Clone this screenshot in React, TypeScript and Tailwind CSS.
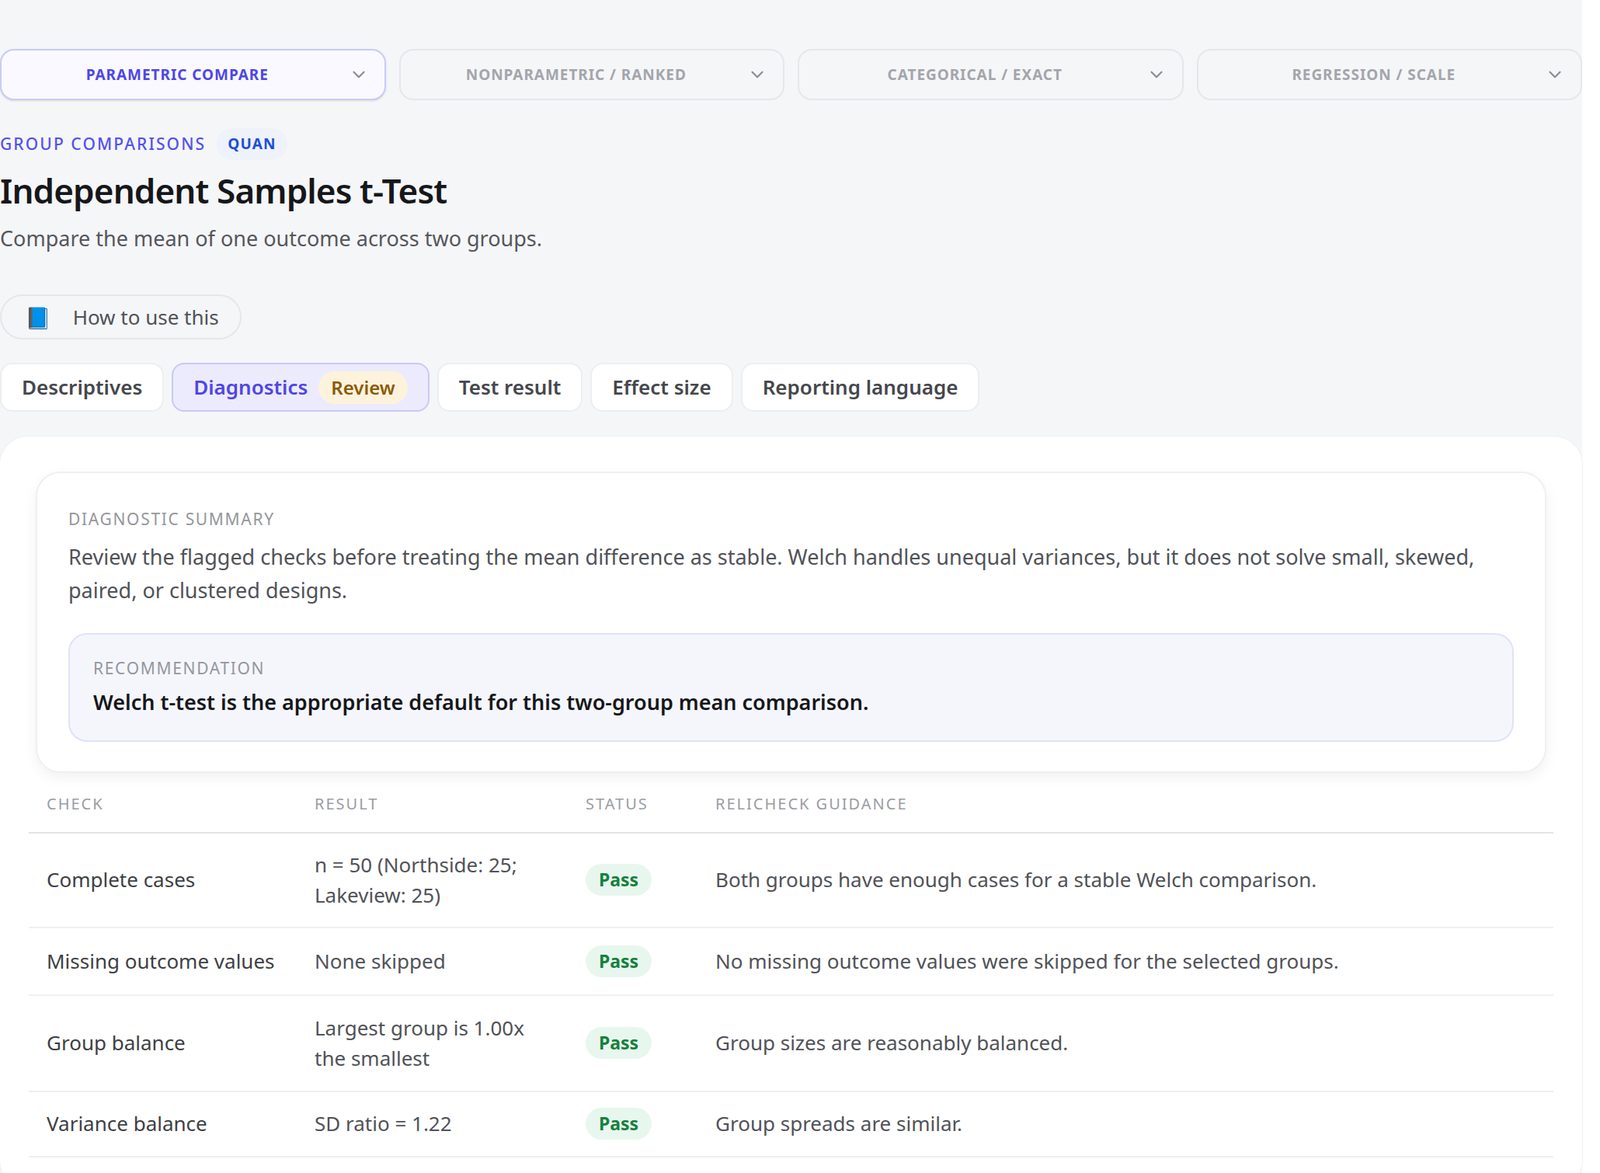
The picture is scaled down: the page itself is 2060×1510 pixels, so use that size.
import React from 'react';
import { ChevronDown } from 'lucide-react';

const families = [
  { label: 'Parametric compare', active: true },
  { label: 'Nonparametric / ranked', active: false },
  { label: 'Categorical / exact', active: false },
  { label: 'Regression / scale', active: false },
];

const tabs = ['Descriptives', 'Diagnostics', 'Test result', 'Effect size', 'Reporting language'];

const checks = [
  { check: 'Complete cases', result: 'n = 50 (Northside: 25; Lakeview: 25)', guidance: 'Both groups have enough cases for a stable Welch comparison.', h: 'h-[122px]' },
  { check: 'Missing outcome values', result: 'None skipped', guidance: 'No missing outcome values were skipped for the selected groups.', h: 'h-[87px]' },
  { check: 'Group balance', result: 'Largest group is 1.00x the smallest', guidance: 'Group sizes are reasonably balanced.', h: 'h-[124px]' },
  { check: 'Variance balance', result: 'SD ratio = 1.22', guidance: 'Group spreads are similar.', h: 'h-[84px]' },
];

export default function App() {
  return (
    <div className="min-h-screen bg-[#f5f6f8] font-['Inter','Liberation_Sans',sans-serif] text-[#1f2023] w-[2037px] pt-[63px]">
      {/* test family selectors */}
      <div className="grid grid-cols-4 gap-[17px]">
        {families.map(f => (
          <button
            key={f.label}
            className={
              f.active
                ? 'relative h-[66px] rounded-[18px] border-2 border-[#c9ccf6] bg-[#f9f9ff] shadow-sm flex items-center justify-center'
                : 'relative h-[66px] rounded-[18px] border-2 border-[#e6e7ea] bg-[#f5f6f8] flex items-center justify-center'
            }
          >
            <span className={`text-[19px] font-bold uppercase tracking-[0.05em] pr-[40px] ${f.active ? 'text-[#4f46e5]' : 'text-[#a3a5ab]'}`}>
              {f.label}
            </span>
            <ChevronDown className="absolute right-[20px] w-[26px] h-[26px] text-[#8b8d93]" strokeWidth={2} />
          </button>
        ))}
      </div>

      <div className="mt-[36px] flex items-center gap-[14px]">
        <span className="text-[21px] font-medium uppercase tracking-[0.1em] text-[#5451ee]">Group comparisons</span>
        <span className="px-[14px] py-[6px] rounded-full bg-[#eef2fa] text-[19px] font-bold tracking-[0.06em] text-[#1d4ed8]">QUAN</span>
      </div>
      <h1 className="mt-[12px] text-[44px] font-semibold tracking-[-0.02em] leading-tight text-[#16171a]">Independent Samples t-Test</h1>
      <p className="mt-[14px] text-[27px] text-[#55575c]">Compare the mean of one outcome across two groups.</p>

      <button className="mt-[52px] h-[58px] w-[311px] rounded-full border-2 border-[#e6e7ea] bg-[#f5f6f8] flex items-center gap-[28px] pl-[30px]">
        <span className="text-[27px] leading-none">📘</span>
        <span className="text-[26px] text-[#505257]">How to use this</span>
      </button>

      {/* tabs */}
      <div className="mt-[30px] flex gap-[10px]">
        {tabs.map(t =>
          t === 'Diagnostics' ? (
            <div key={t} className="h-[63px] px-[26px] rounded-[16px] border-2 border-[#c7c9f7] bg-[#ecebfd] flex items-center gap-[14px]">
              <span className="text-[26px] font-semibold text-[#4f46e5]">{t}</span>
              <span className="px-[16px] py-[3px] rounded-full bg-[#fdf3dc] text-[24px] font-semibold text-[#8a5a08]">Review</span>
            </div>
          ) : (
            <div key={t} className="h-[63px] px-[26px] rounded-[16px] border-2 border-[#eceef0] bg-white flex items-center">
              <span className="text-[26px] font-semibold text-[#45474c]">{t}</span>
            </div>
          )
        )}
      </div>

      {/* diagnostics panel */}
      <div className="mt-[32px] rounded-[36px] bg-white pt-[45px] px-[37px] pb-[40px] shadow-[0_0_0_1px_#eef0f2]">
        <div className="mx-[9px] rounded-[32px] border-2 border-[#eef0f2] bg-white shadow-[0_6px_18px_rgba(0,0,0,0.06)] px-[40px] pt-[44px] pb-[38px]">
          <div className="text-[21px] uppercase tracking-[0.08em] text-[#94969c]">Diagnostic summary</div>
          <p className="mt-[10px] text-[27px] leading-[43px] text-[#505257]">
            Review the flagged checks before treating the mean difference as stable. Welch handles unequal variances, but it does not solve small, skewed, paired, or clustered designs.
          </p>
          <div className="mt-[34px] rounded-[24px] border-2 border-[#dfe2f7] bg-[#f5f6fc] px-[30px] pt-[28px] pb-[28px]">
            <div className="text-[21px] uppercase tracking-[0.08em] text-[#94969c]">Recommendation</div>
            <div className="mt-[8px] text-[27px] font-semibold text-[#16171a]">
              Welch t-test is the appropriate default for this two-group mean comparison.
            </div>
          </div>
        </div>

        <div className="mt-[4px]">
          <div className="grid grid-cols-[345px_349px_167px_1fr] h-[74px] items-center border-b-2 border-[#e3e4e7] text-[20px] uppercase tracking-[0.1em] text-[#9a9ca2]">
            <div className="pl-[23px]">Check</div>
            <div className="pl-[23px]">Result</div>
            <div className="pl-[23px]">Status</div>
            <div className="pl-[23px]">Relicheck guidance</div>
          </div>
          {checks.map(r => (
            <div key={r.check} className={`grid grid-cols-[345px_349px_167px_1fr] ${r.h} items-center border-b-2 border-[#eeeff1] text-[26px] leading-[39px] text-[#505257]`}>
              <div className="pl-[23px] text-[#3d3f44]">{r.check}</div>
              <div className="pl-[23px] pr-[40px]">{r.result}</div>
              <div className="pl-[23px]">
                <span className="inline-block px-[17px] py-[1px] rounded-full bg-[#e8f7ee] text-[23px] font-bold text-[#15803d]">Pass</span>
              </div>
              <div className="pl-[23px]">{r.guidance}</div>
            </div>
          ))}
        </div>
      </div>
    </div>
  );
}
